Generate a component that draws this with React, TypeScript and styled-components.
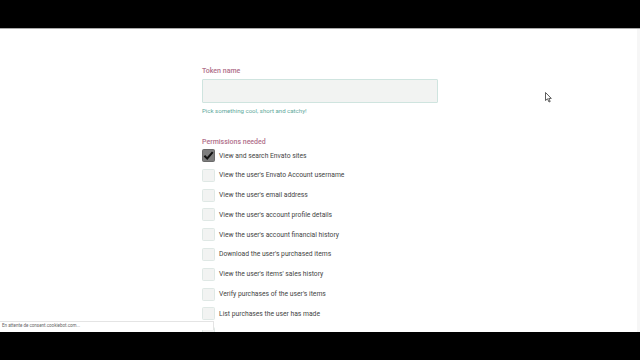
import React from 'react';
import styled, { createGlobalStyle } from 'styled-components';

const permissions = [
  'View and search Envato sites',
  "View the user's Envato Account username",
  "View the user's email address",
  "View the user's account profile details",
  "View the user's account financial history",
  "Download the user's purchased items",
  "View the user's items' sales history",
  "Verify purchases of the user's items",
  'List purchases the user has made',
  '',
];

const App = () => {
  return (
    <>
      <GlobalStyle />
      <Frame>
        <Letterbox />
        <Viewport>
          <Content>
            <Label>Token name</Label>
            <TokenInput />
            <Hint>Pick something cool, short and catchy!</Hint>
            <SectionLabel>Permissions needed</SectionLabel>
            <List>
              {permissions.map((p, i) => (
                <Row key={i}>
                  <Box checked={i === 0}>
                    {i === 0 && (
                      <svg width="11" height="11" viewBox="0 0 12 12">
                        <path d="M1.5 6.2 L4.6 9.2 L10.6 2.4" fill="none" stroke="#111" strokeWidth="2.2" />
                      </svg>
                    )}
                  </Box>
                  {p && <RowText>{p}</RowText>}
                </Row>
              ))}
            </List>
          </Content>
          <Cursor>
            <svg width="7" height="11" viewBox="0 0 7 11">
              <path d="M0.5 0.5 L0.5 8.5 L2.5 6.8 L4 10 L5.2 9.5 L3.8 6.4 L6.3 6.4 Z" fill="#fff" stroke="#333" strokeWidth="0.8" />
            </svg>
          </Cursor>
          <StatusBar>En attente de consent.cookiebot.com...</StatusBar>
          <Scrollbar />
        </Viewport>
        <Letterbox />
      </Frame>
    </>
  );
};

export default App;

const GlobalStyle = createGlobalStyle`
  html, body {
    margin: 0;
    padding: 0;
    background: #000;
  }
`;

const Frame = styled.div`
  width: 640px;
  height: 360px;
  display: flex;
  flex-direction: column;
  background: #000;
  font-family: Roboto, "Liberation Sans", sans-serif;
`;

const Letterbox = styled.div`
  height: 28px;
  background: #000;
`;

const Viewport = styled.div`
  position: relative;
  height: 304px;
  background: #fff;
  border-top: 1px solid #a9a9a9;
  overflow: hidden;
  box-sizing: border-box;
`;

const Content = styled.div`
  width: 236px;
  margin-left: 202px;
  padding-top: 37px;
  display: flex;
  flex-direction: column;
`;

const Label = styled.div`
  font-size: 7px;
  font-weight: 500;
  color: #b0708a;
  line-height: 10px;
`;

const TokenInput = styled.div`
  margin-top: 3px;
  height: 22px;
  background: #f2f3f2;
  border: 1px solid #cfe4df;
  border-radius: 1px;
`;

const Hint = styled.div`
  margin-top: 3px;
  font-size: 6.1px;
  color: #5ea99b;
  line-height: 10px;
`;

const SectionLabel = styled(Label)`
  margin-top: 21px;
`;

const List = styled.div`
  margin-top: 2px;
  display: flex;
  flex-direction: column;
  gap: 6.8px;
`;

const Row = styled.div`
  display: flex;
  align-items: center;
  gap: 4px;
  height: 13px;
`;

const Box = styled.div<{ checked: boolean }>`
  width: 13px;
  height: 13px;
  box-sizing: border-box;
  border-radius: 1.5px;
  display: flex;
  align-items: center;
  justify-content: center;
  background: ${({ checked }) => (checked ? '#7d7d7d' : '#f2f3f2')};
  border: 1px solid ${({ checked }) => (checked ? '#6a6a6a' : '#dfe8e5')};
`;

const RowText = styled.div`
  font-size: 6.75px;
  color: #444;
  white-space: nowrap;
`;

const Cursor = styled.div`
  position: absolute;
  left: 545px;
  top: 63px;
  line-height: 0;
`;

const StatusBar = styled.div`
  position: absolute;
  left: 0;
  bottom: 2px;
  width: 214px;
  height: 9px;
  box-sizing: border-box;
  padding-left: 2px;
  background: #fff;
  border-top: 1px solid #e4e4e4;
  border-right: 1px solid #e4e4e4;
  font-size: 4.5px;
  line-height: 8px;
  color: #666;
`;

const Scrollbar = styled.div`
  position: absolute;
  right: 0;
  top: 0;
  bottom: 0;
  width: 3px;
  background: #f6f6f6;
`;
